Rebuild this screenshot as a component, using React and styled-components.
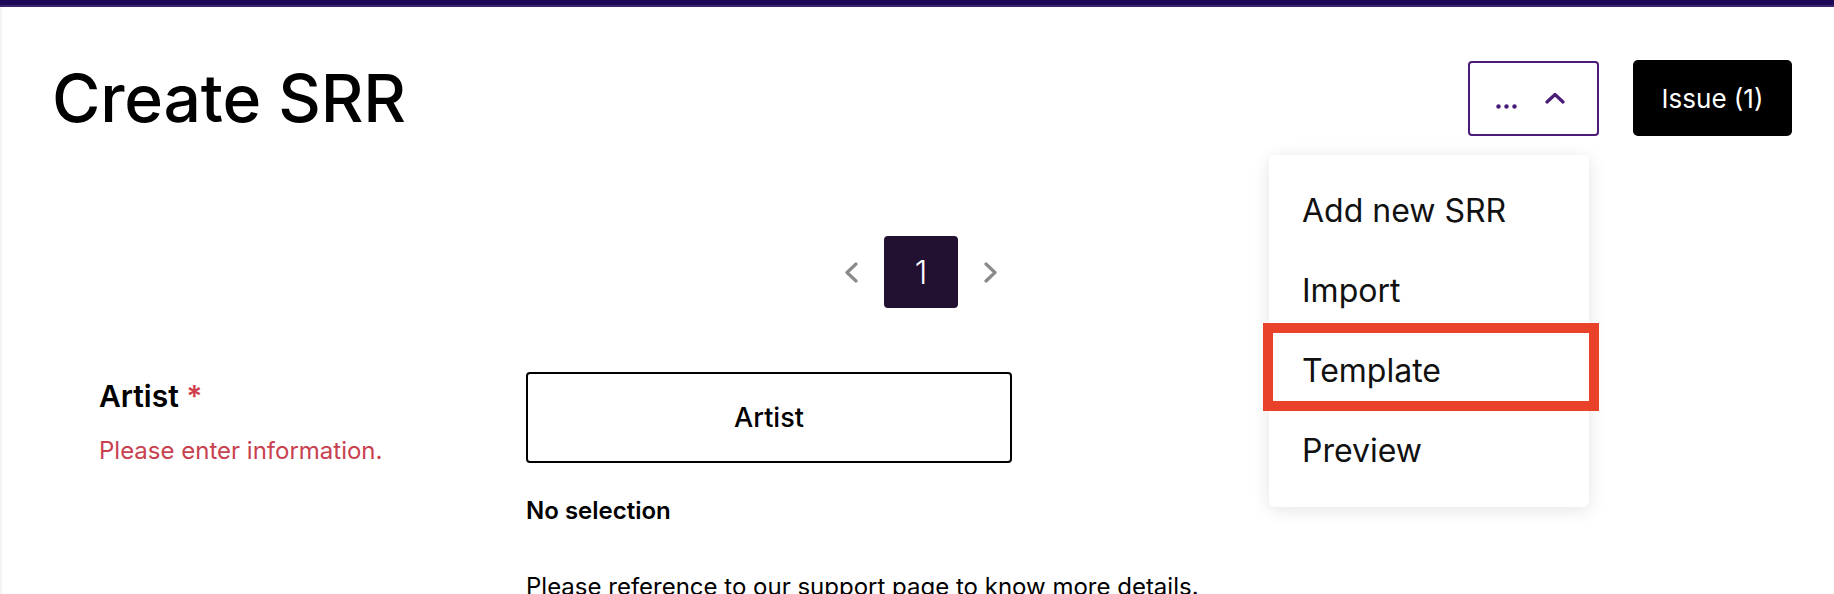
import React from 'react'
import styled, { createGlobalStyle, css } from 'styled-components'

const GlobalStyle = createGlobalStyle`
  html, body {
    margin: 0;
    padding: 0;
    background: #ffffff;
    font-family: Inter, "Noto Sans", "Liberation Sans", sans-serif;
    color: #000;
  }
  * { box-sizing: border-box; }
`

const TopBar = styled.div`
  height: 7px;
  background: #1e0958;
  border-bottom: 2px solid #3b2471;
`

const Page = styled.div`
  min-height: calc(100vh - 7px);
  border-left: 2px solid #f4f4f4;
`

const Header = styled.header`
  display: flex;
  justify-content: space-between;
  align-items: center;
  padding: 53px 42px 0 50px;
`

const Title = styled.h1`
  margin: 0;
  font-size: 66px;
  line-height: 76px;
  font-weight: 500;
  letter-spacing: -0.2px;
`

const Actions = styled.div`
  display: flex;
  align-items: center;
  gap: 34px;
`

const MoreWrap = styled.div`
  position: relative;
`

const MoreButton = styled.button`
  width: 131px;
  height: 75px;
  border: 2px solid #4a1c78;
  border-radius: 4px;
  background: #fff;
  display: flex;
  align-items: center;
  justify-content: center;
  gap: 28px;
  padding: 0 7px 0 0;
  cursor: pointer;
`

const IssueButton = styled.button`
  width: 159px;
  height: 76px;
  border: none;
  border-radius: 5px;
  background: #000;
  color: #fff;
  font-family: inherit;
  font-size: 26px;
  font-weight: 400;
  cursor: pointer;
`

const Menu = styled.ul`
  position: absolute;
  top: calc(100% + 19px);
  right: 10px;
  width: 320px;
  margin: 0;
  padding: 16px 0;
  list-style: none;
  background: #fff;
  border-radius: 6px;
  box-shadow: 0 3px 18px rgba(0, 0, 0, 0.11);
  z-index: 10;
`

const MenuItem = styled.li`
  position: relative;
  height: 80px;
  display: flex;
  align-items: center;
  padding-left: 33px;
  font-size: 32px;
  color: #111;
  ${({ $highlighted }) =>
    $highlighted &&
    css`
      &::after {
        content: '';
        position: absolute;
        top: -8px;
        left: -6px;
        right: -10px;
        bottom: 0;
        border: 10px solid #e8432a;
      }
    `}
`

const Pagination = styled.nav`
  display: flex;
  justify-content: center;
  align-items: center;
  gap: 26px;
  margin: 100px 0 0 6px;
`

const PageBox = styled.div`
  width: 74px;
  height: 72px;
  border-radius: 4px;
  background: #21102f;
  color: #fff;
  display: flex;
  align-items: center;
  justify-content: center;
  font-size: 32px;
  font-weight: 300;
`

const FormRow = styled.section`
  display: flex;
  margin-top: 64px;
  padding-left: 97px;
`

const LabelCol = styled.div`
  width: 427px;
  padding-top: 6px;
`

const Label = styled.div`
  font-size: 30px;
  line-height: 36px;
  font-weight: 600;
`

const Required = styled.span`
  color: #d0404f;
`

const ErrorText = styled.div`
  margin-top: 22px;
  font-size: 24px;
  line-height: 30px;
  color: #c8414f;
`

const FieldCol = styled.div`
  width: 486px;
`

const SelectBox = styled.div`
  height: 91px;
  border: 2px solid #000;
  border-radius: 4px;
  display: flex;
  align-items: center;
  justify-content: center;
  font-size: 27px;
  font-weight: 500;
`

const Selection = styled.div`
  margin-top: 33px;
  font-size: 24px;
  line-height: 30px;
  font-weight: 600;
`

const Hint = styled.p`
  margin: 46px 0 0;
  font-size: 24px;
  line-height: 30px;
  white-space: nowrap;
`

const Dots = () => (
  <svg width="21" height="22" viewBox="0 0 21 22">
    <circle cx="2.5" cy="19.5" r="2.2" fill="#4a1c78" />
    <circle cx="10.5" cy="19.5" r="2.2" fill="#4a1c78" />
    <circle cx="18.5" cy="19.5" r="2.2" fill="#4a1c78" />
  </svg>
)

const ChevronUp = () => (
  <svg width="20" height="12" viewBox="0 0 20 12">
    <path d="M2 10 L10 2.5 L18 10" fill="none" stroke="#4a1c78" strokeWidth="3.2" strokeLinecap="round" strokeLinejoin="round" />
  </svg>
)

const Chevron = ({ dir }) => (
  <svg width="14" height="21" viewBox="0 0 14 21">
    <path
      d={dir === 'left' ? 'M12 2 L3 10.5 L12 19' : 'M2 2 L11 10.5 L2 19'}
      fill="none"
      stroke="#8a8a8a"
      strokeWidth="3.2"
      strokeLinecap="round"
      strokeLinejoin="round"
    />
  </svg>
)

export default function App() {
  const menuItems = ['Add new SRR', 'Import', 'Template', 'Preview']

  return (
    <>
      <GlobalStyle />
      <TopBar />
      <Page>
        <Header>
          <Title>Create SRR</Title>
          <Actions>
            <MoreWrap>
              <MoreButton>
                <Dots />
                <ChevronUp />
              </MoreButton>
              <Menu>
                {menuItems.map((item) => (
                  <MenuItem key={item} $highlighted={item === 'Template'}>
                    {item}
                  </MenuItem>
                ))}
              </Menu>
            </MoreWrap>
            <IssueButton>Issue (1)</IssueButton>
          </Actions>
        </Header>

        <Pagination>
          <Chevron dir="left" />
          <PageBox>1</PageBox>
          <Chevron dir="right" />
        </Pagination>

        <FormRow>
          <LabelCol>
            <Label>
              Artist <Required>*</Required>
            </Label>
            <ErrorText>Please enter information.</ErrorText>
          </LabelCol>
          <FieldCol>
            <SelectBox>Artist</SelectBox>
            <Selection>No selection</Selection>
            <Hint>Please reference to our support page to know more details.</Hint>
          </FieldCol>
        </FormRow>
      </Page>
    </>
  )
}
